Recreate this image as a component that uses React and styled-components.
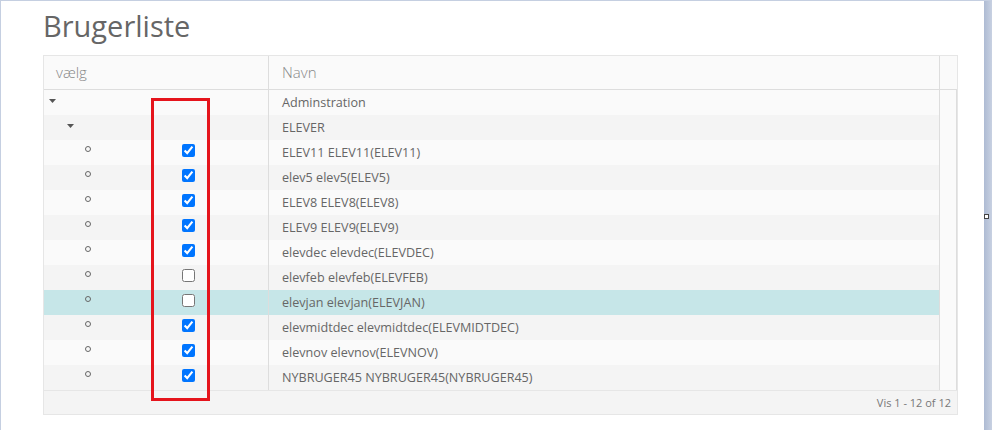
import React from 'react';
import styled, { createGlobalStyle } from 'styled-components';

const GlobalStyle = createGlobalStyle`
  html, body {
    margin: 0;
    padding: 0;
    background: #c5cfe1;
  }
  body {
    font-family: "Open Sans", "DejaVu Sans", sans-serif;
  }
`;

const Frame = styled.div`
  display: flex;
  height: 430px;
  padding: 1px 0 0 1px;
  box-sizing: border-box;
  background: #c5cfe1;
`;

const Panel = styled.div`
  flex: 1;
  background: #ffffff;
  padding: 5px 26px 0 42px;
`;

const SideStrip = styled.div`
  position: relative;
  width: 8px;
  background: linear-gradient(to right, #aebbd3, #c8d1e2);
`;

const Handle = styled.div`
  position: absolute;
  left: 0;
  top: 213px;
  width: 5px;
  height: 5px;
  box-sizing: border-box;
  border: 1px solid #444;
  background: #fff;
`;

const Title = styled.h1`
  margin: 0 0 9px 0;
  font-size: 29px;
  font-weight: 400;
  line-height: 40px;
  color: #666;
`;

const Grid = styled.div`
  position: relative;
  border: 1px solid #e6e6e6;
  background: #fafafa;
`;

const HeaderRow = styled.div`
  display: flex;
  height: 33px;
  border-bottom: 1px solid #dddddd;
  background: #fafafa;
`;

const HeaderCell = styled.div`
  box-sizing: border-box;
  width: ${p => (p.$width ? `${p.$width}px` : 'auto')};
  flex: ${p => (p.$width ? 'none' : '1')};
  padding-left: ${p => p.$pad || 0}px;
  border-right: ${p => (p.$last ? 'none' : '1px solid #dddddd')};
  font-size: 15px;
  font-weight: 300;
  line-height: 33px;
  color: #888;
`;

const Body = styled.div`
  display: flex;
`;

const Rows = styled.div`
  flex: 1;
`;

const Gutter = styled.div`
  width: 16px;
  border-left: 1px solid #dddddd;
  border-right: 1px solid #dddddd;
  background: #fafafa;
`;

const Row = styled.div`
  display: flex;
  height: 25px;
  background: ${p => (p.$selected ? '#c6e6e8' : p.$even ? '#f4f4f4' : '#fafafa')};
`;

const TreeCell = styled.div`
  display: flex;
  width: 225px;
  box-sizing: border-box;
  border-right: 1px solid #dddddd;
`;

const TreeSlot = styled.div`
  width: 138px;
  box-sizing: border-box;
  padding-left: ${p => 5 + p.$level * 18}px;
`;

const Caret = styled.svg`
  display: block;
  margin-top: 9px;
`;

const Leaf = styled.div`
  width: 6px;
  height: 6px;
  box-sizing: border-box;
  margin-top: 6px;
  border: 1px solid #666;
  border-radius: 50%;
`;

const Check = styled.input`
  display: block;
  width: 13px;
  height: 13px;
  margin: 4px 0 0 0;
`;

const NameCell = styled.div`
  flex: 1;
  padding-left: 13px;
  font-size: 12.6px;
  line-height: 25px;
  color: #666;
  white-space: nowrap;
`;

const Footer = styled.div`
  height: 24px;
  box-sizing: border-box;
  border-top: 1px solid #e6e6e6;
  background: #f4f4f4;
  padding: 3px 6px 0 0;
  text-align: right;
  font-size: 11px;
  line-height: 18px;
  color: #777;
`;

const Marker = styled.div`
  position: absolute;
  left: 107px;
  top: 42px;
  width: 59px;
  height: 303px;
  box-sizing: border-box;
  border: 3px solid #e5141c;
  pointer-events: none;
`;

const rows = [
  { name: 'Adminstration', level: 0, group: true },
  { name: 'ELEVER', level: 1, group: true },
  { name: 'ELEV11 ELEV11(ELEV11)', level: 2, checked: true },
  { name: 'elev5 elev5(ELEV5)', level: 2, checked: true },
  { name: 'ELEV8 ELEV8(ELEV8)', level: 2, checked: true },
  { name: 'ELEV9 ELEV9(ELEV9)', level: 2, checked: true },
  { name: 'elevdec elevdec(ELEVDEC)', level: 2, checked: true },
  { name: 'elevfeb elevfeb(ELEVFEB)', level: 2, checked: false },
  { name: 'elevjan elevjan(ELEVJAN)', level: 2, checked: false, selected: true },
  { name: 'elevmidtdec elevmidtdec(ELEVMIDTDEC)', level: 2, checked: true },
  { name: 'elevnov elevnov(ELEVNOV)', level: 2, checked: true },
  { name: 'NYBRUGER45 NYBRUGER45(NYBRUGER45)', level: 2, checked: true },
];

const TreeIcon = ({ group }) =>
  group ? (
    <Caret width="7" height="4" viewBox="0 0 7 4">
      <polygon points="0,0 7,0 3.5,4" fill="#555" />
    </Caret>
  ) : (
    <Leaf />
  );

export default function App() {
  return (
    <>
      <GlobalStyle />
      <Frame>
        <Panel>
          <Title>Brugerliste</Title>
          <Grid>
            <HeaderRow>
              <HeaderCell $width={225} $pad={12}>vælg</HeaderCell>
              <HeaderCell $pad={13}>Navn</HeaderCell>
              <HeaderCell $width={17} $last />
            </HeaderRow>
            <Body>
              <Rows>
                {rows.map((r, i) => (
                  <Row key={r.name} $even={i % 2 === 1} $selected={r.selected}>
                    <TreeCell>
                      <TreeSlot $level={r.level}>
                        <TreeIcon group={r.group} />
                      </TreeSlot>
                      {!r.group && <Check type="checkbox" defaultChecked={r.checked} />}
                    </TreeCell>
                    <NameCell>{r.name}</NameCell>
                  </Row>
                ))}
              </Rows>
              <Gutter />
            </Body>
            <Footer>Vis 1 - 12 of 12</Footer>
            <Marker />
          </Grid>
        </Panel>
        <SideStrip>
          <Handle />
        </SideStrip>
      </Frame>
    </>
  );
}
